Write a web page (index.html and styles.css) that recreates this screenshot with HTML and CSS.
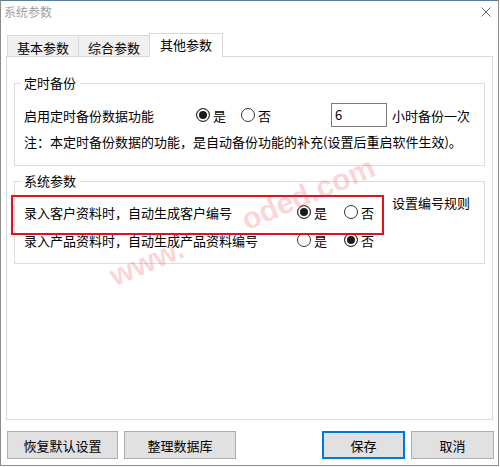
FILE: index.html
```html
<!DOCTYPE html>
<html>
<head>
  <meta charset="utf-8">
  <link rel="stylesheet" href="styles.css">
</head>
<body>
  <div class="window">
    <div class="titlebar">
      <span class="title">系统参数</span>
      <svg class="close" width="10" height="10" viewBox="0 0 10 10">
        <path d="M0.5 0.5 L9.5 9.5 M9.5 0.5 L0.5 9.5" stroke="#6e6e6e" stroke-width="1" fill="none" />
      </svg>
    </div>

    <div class="tabs">
      <div class="tab">基本参数</div>
      <div class="tab">综合参数</div>
      <div class="tab active">其他参数</div>
    </div>

    <div class="panel">
      <fieldset class="group backup">
        <legend>定时备份</legend>
        <div class="row">
          <span class="label">启用定时备份数据功能</span>
          <span class="radio checked yes">是</span>
          <span class="radio no">否</span>
          <span class="hours">6</span>
          <span>小时备份一次</span>
        </div>
        <div class="row">注：本定时备份数据的功能，是自动备份功能的补充(设置后重启软件生效)。</div>
      </fieldset>

      <fieldset class="group system">
        <legend>系统参数</legend>
        <div class="system-body">
          <div class="rows">
            <div class="row marked">
              <span class="label">录入客户资料时，自动生成客户编号</span>
              <span class="radio checked yes">是</span>
              <span class="radio no">否</span>
            </div>
            <div class="row">
              <span class="label">录入产品资料时，自动生成产品资料编号</span>
              <span class="radio yes">是</span>
              <span class="radio checked no">否</span>
            </div>
          </div>
          <span class="rule">设置编号规则</span>
        </div>
      </fieldset>
    </div>

    <div class="buttons">
      <div class="btn-group">
        <button type="button" class="btn reset">恢复默认设置</button>
        <button type="button" class="btn tidy">整理数据库</button>
      </div>
      <div class="btn-group">
        <button type="button" class="btn small default">保存</button>
        <button type="button" class="btn small">取消</button>
      </div>
    </div>

    <!-- faint site watermark over the dialog -->
    <div class="watermark"><span>www.</span><span>oded.com</span></div>
  </div>
</body>
</html>
```

FILE: styles.css
```css
* {
  box-sizing: border-box;
}

body {
  margin: 0;
  background: #fff;
  color: #000;
  font-family: "Noto Sans CJK SC", "Noto Sans", sans-serif;
  font-size: 13px;
}

.window {
  position: relative;
  display: flex;
  flex-direction: column;
  width: 499px;
  height: 466px;
  border: 1px solid #8c8c8c;
  border-top-color: #5a7f9b;
  overflow: hidden;
}

/* Title bar */
.titlebar {
  display: flex;
  justify-content: space-between;
  align-items: flex-start;
  height: 32px;
}

.title {
  padding-left: 3px;
  line-height: 22px;
  font-size: 12px;
  color: #a0a0a0;
}

.close {
  margin: 6px 7px 0 0;
}

/* Tabs */
.tabs {
  display: flex;
  align-items: flex-end;
  height: 23px;
  padding-left: 6px;
}

.tab {
  height: 21px;
  padding: 4px 9px 0;
  line-height: 16px;
  border: 1px solid #d9d9d9;
  border-bottom: 0;
  background: #f0f0f0;
}

.tab + .tab {
  margin-left: -1px;
}

.tab.active {
  position: relative;
  z-index: 1;
  height: 24px;
  padding: 3px 10px 4px;
  margin-bottom: -1px;
  background: #fff;
}

.panel {
  height: 364px;
  margin: 0 5px;
  padding: 0 7px;
  border: 1px solid #d9d9d9;
  background: #fff;
}

/* Group boxes */
.group {
  min-width: 0;
  margin: 17px 0 0;
  padding: 10px 8px 11px 9px;
  border: 1px solid #dcdcdc;
}

.group.system {
  margin-top: 6px;
  padding: 8px 8px 9px 9px;
}

legend {
  margin-left: -3px;
  padding: 0 4px 0 3px;
  line-height: 18px;
}

.row {
  display: flex;
  align-items: center;
  height: 26px;
  white-space: nowrap;
}

.system .row {
  height: 28px;
}

.backup .label {
  width: 172px;
}

.system .label {
  width: 273px;
}

.radio {
  display: flex;
  align-items: center;
}

.radio:before {
  content: "";
  width: 12px;
  height: 12px;
  margin-right: 3px;
  border: 1px solid #333;
  border-radius: 50%;
}

.radio.checked:before {
  background: #1a1a1a;
  box-shadow: inset 0 0 0 2px #fff;
}

.backup .yes {
  width: 45px;
}

.backup .no {
  width: 90px;
}

.system .yes {
  width: 47px;
}

.hours {
  width: 56px;
  height: 24px;
  margin-right: 5px;
  padding: 0 3px;
  line-height: 22px;
  border: 1px solid #7a7a7a;
}

.system-body {
  display: flex;
}

.rows {
  width: 368px;
}

.rule {
  margin-top: -4px;
  line-height: 18px;
}

/* Red annotation box round the first row */
.row.marked {
  position: relative;
}

.row.marked:after {
  content: "";
  position: absolute;
  left: -13px;
  top: -3px;
  width: 369px;
  height: 36px;
  border: 2px solid #e0101e;
}

/* Bottom buttons */
.buttons {
  display: flex;
  justify-content: space-between;
  margin-top: 11px;
  padding: 0 4px 0 6px;
}

.btn-group {
  display: flex;
  gap: 6px;
}

.btn {
  height: 28px;
  padding: 0;
  border: 1px solid #adadad;
  background: #e1e1e1;
  color: #000;
  font: inherit;
}

.btn.reset {
  width: 111px;
}

.btn.tidy {
  width: 112px;
}

.btn.small {
  width: 83px;
}

.btn.default {
  border-color: #0078d7;
  box-shadow: inset 0 0 0 1px #0078d7;
}

.watermark {
  position: absolute;
  left: 116px;
  top: 260px;
  display: flex;
  justify-content: space-between;
  width: 285px;
  transform: rotate(-23deg);
  transform-origin: left bottom;
  font-family: "Liberation Sans", sans-serif;
  font-size: 30px;
  font-weight: bold;
  line-height: 30px;
  color: rgba(236, 70, 70, 0.22);
  pointer-events: none;
}
```
